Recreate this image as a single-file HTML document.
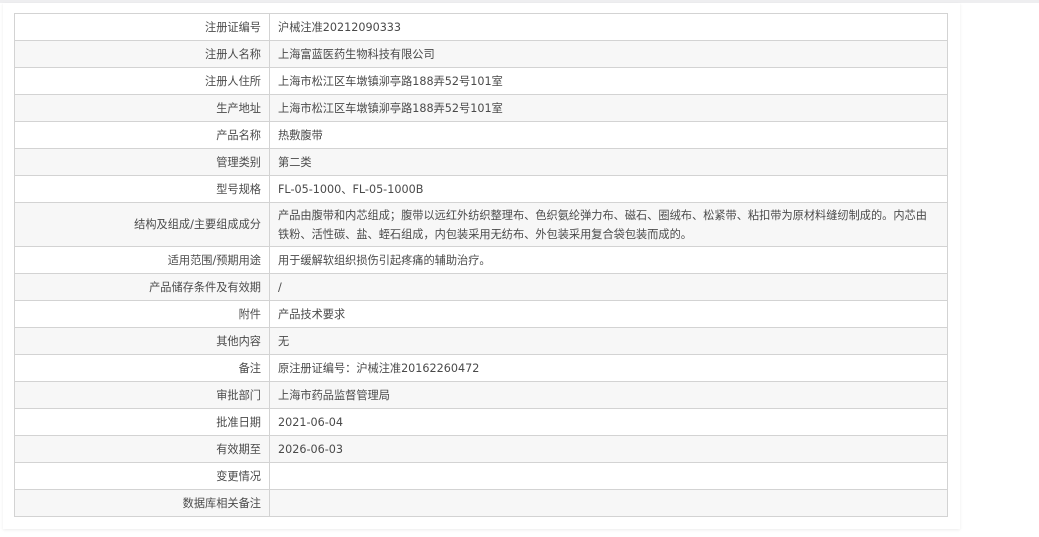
<!DOCTYPE html>
<html><head><meta charset="utf-8"><style>
html,body{margin:0;padding:0;width:1039px;height:537px;background:#fff;overflow:hidden}
body{border-top:3px solid #eeeef0;box-sizing:border-box}
.panel{position:absolute;left:3px;top:3px;width:957px;height:526px;background:#fff;box-shadow:0 1px 3px rgba(0,0,0,.08)}
table{position:absolute;left:11px;top:10px;width:934px;border-collapse:collapse;font-family:"DejaVu Sans","Noto Sans CJK SC",sans-serif;font-size:11.2px;color:#4a4a4a;border:1px solid #ccc}
td{border:1px solid #d3d3d3;height:26px;padding:0 8px;line-height:19px}
td.l{width:238px;text-align:right;padding-right:8px}
tr:nth-child(even) td{background:#f7f7f7}
tr.d td{height:43px}
</style></head><body><div class="panel"><table>
<tr><td class="l">注册证编号</td><td>沪械注准20212090333</td></tr>
<tr><td class="l">注册人名称</td><td>上海富蓝医药生物科技有限公司</td></tr>
<tr><td class="l">注册人住所</td><td>上海市松江区车墩镇泖亭路188弄52号101室</td></tr>
<tr><td class="l">生产地址</td><td>上海市松江区车墩镇泖亭路188弄52号101室</td></tr>
<tr><td class="l">产品名称</td><td>热敷腹带</td></tr>
<tr><td class="l">管理类别</td><td>第二类</td></tr>
<tr><td class="l">型号规格</td><td>FL-05-1000、FL-05-1000B</td></tr>
<tr class="d"><td class="l">结构及组成/主要组成成分</td><td>产品由腹带和内芯组成；腹带以远红外纺织整理布、色织氨纶弹力布、磁石、圈绒布、松紧带、粘扣带为原材料缝纫制成的。内芯由<br>铁粉、活性碳、盐、蛭石组成，内包装采用无纺布、外包装采用复合袋包装而成的。</td></tr>
<tr><td class="l">适用范围/预期用途</td><td>用于缓解软组织损伤引起疼痛的辅助治疗。</td></tr>
<tr><td class="l">产品储存条件及有效期</td><td>/</td></tr>
<tr><td class="l">附件</td><td>产品技术要求</td></tr>
<tr><td class="l">其他内容</td><td>无</td></tr>
<tr><td class="l">备注</td><td>原注册证编号：沪械注准20162260472</td></tr>
<tr><td class="l">审批部门</td><td>上海市药品监督管理局</td></tr>
<tr><td class="l">批准日期</td><td>2021-06-04</td></tr>
<tr><td class="l">有效期至</td><td>2026-06-03</td></tr>
<tr><td class="l">变更情况</td><td></td></tr>
<tr><td class="l">数据库相关备注</td><td></td></tr>
</table></div></body></html>
